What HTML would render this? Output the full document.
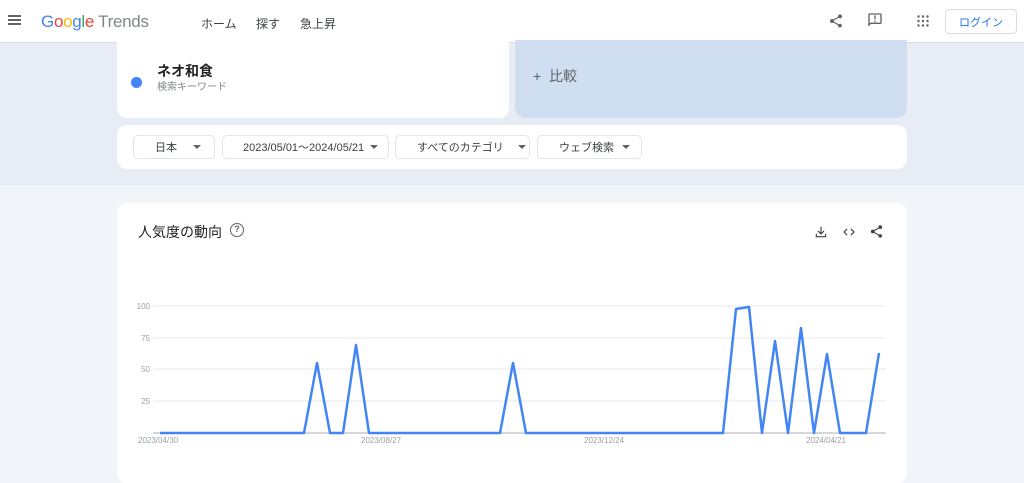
<!DOCTYPE html>
<html><head><meta charset="utf-8"><style>
*{box-sizing:border-box;margin:0;padding:0}
body{width:1024px;height:467px;overflow:hidden;background:#f1f4f9;font-family:"Liberation Sans","Noto Sans CJK JP",sans-serif;position:relative}
.hdr{position:absolute;left:0;top:0;width:1024px;height:43px;background:#fff;border-bottom:1px solid #dde1e6}
.band{position:absolute;left:0;top:43px;width:1024px;height:142px;background:#e8edf5}
.abs{position:absolute}
.card{position:absolute;background:#fff;border-radius:10px}
.btn{position:absolute;top:135px;height:24px;border:1px solid #e2e4e8;border-radius:5px;font-size:11px;color:#3c4043;display:flex;align-items:center}
.tri{display:inline-block;width:0;height:0;border-left:4px solid transparent;border-right:4px solid transparent;border-top:4px solid #5f6368}
</style></head><body>
<div class="hdr">
 <div class="abs" style="left:8px;top:15px;width:13px;height:2px;background:#5f6368;box-shadow:0 4px 0 #5f6368,0 8px 0 #5f6368"></div>
 <div class="abs" style="left:41px;top:12px;font-size:17px;letter-spacing:-0.3px"><span style="color:#4285f4">G</span><span style="color:#ea4335">o</span><span style="color:#fbbc05">o</span><span style="color:#4285f4">g</span><span style="color:#34a853">l</span><span style="color:#ea4335">e</span><span style="color:#80868b"> Trends</span></div>
 <div class="abs" style="left:201px;top:15px;font-size:12px;color:#3c4043">ホーム</div>
 <div class="abs" style="left:256px;top:15px;font-size:12px;color:#3c4043">探す</div>
 <div class="abs" style="left:256px;top:41px;width:22px;height:3px;background:#1a73e8;border-radius:2px 2px 0 0"></div>
 <div class="abs" style="left:300px;top:15px;font-size:12px;color:#3c4043">急上昇</div>
 <svg class="abs" style="left:828px;top:13px" width="16" height="16" viewBox="0 0 24 24"><path fill="#5f6368" d="M18 16.1c-.8 0-1.4.3-2 .8l-7.1-4.2c.1-.2.1-.5.1-.7s0-.5-.1-.7L16 7.2c.5.5 1.2.8 2 .8 1.7 0 3-1.3 3-3s-1.3-3-3-3-3 1.3-3 3c0 .2 0 .5.1.7L8 9.8C7.5 9.3 6.8 9 6 9c-1.7 0-3 1.3-3 3s1.3 3 3 3c.8 0 1.5-.3 2-.8l7.1 4.2c-.1.2-.1.4-.1.6 0 1.6 1.3 2.9 2.9 2.9s2.9-1.3 2.9-2.9-1.2-2.9-2.8-2.9z"/></svg>
 <svg class="abs" style="left:867px;top:12px" width="16" height="16" viewBox="0 0 24 24"><path fill="#5f6368" d="M20 2H4c-1.1 0-2 .9-2 2v18l4-4h14c1.1 0 2-.9 2-2V4c0-1.1-.9-2-2-2zm0 14H5.2L4 17.2V4h16v12zM11 5h2v6h-2zm0 8h2v2h-2z"/></svg>
 <svg class="abs" style="left:917px;top:15px" width="12" height="12" viewBox="0 0 12 12" fill="#5f6368"><circle cx="1.5" cy="1.5" r="1.2"/><circle cx="6" cy="1.5" r="1.2"/><circle cx="10.5" cy="1.5" r="1.2"/><circle cx="1.5" cy="6" r="1.2"/><circle cx="6" cy="6" r="1.2"/><circle cx="10.5" cy="6" r="1.2"/><circle cx="1.5" cy="10.5" r="1.2"/><circle cx="6" cy="10.5" r="1.2"/><circle cx="10.5" cy="10.5" r="1.2"/></svg>
 <div class="abs" style="left:945px;top:9px;width:72px;height:25px;border:1px solid #dadce0;border-radius:4px;color:#1a73e8;font-size:11px;display:flex;align-items:center;justify-content:center">ログイン</div>
</div>
<div class="band"></div>
<div class="card" style="left:117px;top:40px;width:392px;height:78px;border-radius:0 0 10px 10px"></div>
<div class="abs" style="left:131px;top:77px;width:11px;height:11px;border-radius:50%;background:#4285f4"></div>
<div class="abs" style="left:157px;top:61px;font-size:14px;color:#202124;font-weight:bold">ネオ和食</div>
<div class="abs" style="left:157px;top:78px;font-size:10px;color:#80868b">検索キーワード</div>
<div class="abs" style="left:515px;top:40px;width:392px;height:78px;background:#d0def2;border-radius:0 0 10px 10px"></div>
<div class="abs" style="left:533px;top:66px;font-size:14px;color:#5f6368">+&nbsp;&nbsp;比較</div>
<div class="card" style="left:117px;top:125px;width:790px;height:44px"></div>
<div class="btn" style="left:133px;width:82px;padding-left:21px">日本<span class="tri" style="margin-left:16px"></span></div>
<div class="btn" style="left:222px;width:167px;padding-left:20px">2023/05/01〜2024/05/21<span class="tri" style="margin-left:6px"></span></div>
<div class="btn" style="left:395px;width:135px;padding-left:21px">すべてのカテゴリ<span class="tri" style="margin-left:14px"></span></div>
<div class="btn" style="left:537px;width:105px;padding-left:21px">ウェブ検索<span class="tri" style="margin-left:8px"></span></div>
<div class="card" style="left:117px;top:203px;width:790px;height:280px"></div>
<div class="abs" style="left:138px;top:222px;font-size:14px;color:#202124">人気度の動向</div>
<div class="abs" style="left:230px;top:223px;width:14px;height:14px;border:1.5px solid #5f6368;border-radius:50%;font-size:9px;color:#5f6368;text-align:center;line-height:11px;font-weight:bold">?</div>
<svg class="abs" style="left:814px;top:225px" width="14" height="14" viewBox="0 0 24 24"><path fill="#3c4043" d="M11 3h2v10l3.5-3.5 1.4 1.4L12 16.8l-5.9-5.9 1.4-1.4L11 13zM3 15h2v4h14v-4h2v6H3z"/></svg>
<svg class="abs" style="left:841px;top:225px" width="16" height="14" viewBox="0 0 24 24"><path fill="#3c4043" d="M9.4 16.6 4.8 12l4.6-4.6L8 6l-6 6 6 6zm5.2 0 4.6-4.6-4.6-4.6L16 6l6 6-6 6z"/></svg>
<svg class="abs" style="left:869px;top:224px" width="15" height="15" viewBox="0 0 24 24"><path fill="#3c4043" d="M18 16.1c-.8 0-1.4.3-2 .8l-7.1-4.2c.1-.2.1-.5.1-.7s0-.5-.1-.7L16 7.2c.5.5 1.2.8 2 .8 1.7 0 3-1.3 3-3s-1.3-3-3-3-3 1.3-3 3c0 .2 0 .5.1.7L8 9.8C7.5 9.3 6.8 9 6 9c-1.7 0-3 1.3-3 3s1.3 3 3 3c.8 0 1.5-.3 2-.8l7.1 4.2c-.1.2-.1.4-.1.6 0 1.6 1.3 2.9 2.9 2.9s2.9-1.3 2.9-2.9-1.2-2.9-2.8-2.9z"/></svg>
<svg class="abs" style="left:0;top:0" width="1024" height="467">
 <g stroke="#e8eaed" stroke-width="1">
  <line x1="153" y1="306" x2="886" y2="306"/><line x1="153" y1="338" x2="886" y2="338"/><line x1="153" y1="369" x2="886" y2="369"/><line x1="153" y1="401" x2="886" y2="401"/>
 </g>
 <line x1="153" y1="433" x2="886" y2="433" stroke="#c8cacd" stroke-width="1.5"/>
 <g font-family="Liberation Sans" font-size="8" fill="#9aa0a6" text-anchor="end">
  <text x="150" y="309">100</text><text x="150" y="341">75</text><text x="150" y="372">50</text><text x="150" y="404">25</text>
 </g>
 <g font-family="Liberation Sans" font-size="8" fill="#9aa0a6">
  <text x="138" y="443">2023/04/30</text><text x="361" y="443">2023/08/27</text><text x="584" y="443">2023/12/24</text><text x="806" y="443">2024/04/21</text>
 </g>
 <polyline fill="none" stroke="#4285f4" stroke-width="2.5" stroke-linejoin="round" points="160,433 304,433 317,363 330,433 343,433 356,345 369,433 500,433 513,363 526,433 723,433 736,309 749,307 762,433 775,341 788,433 801,328 814,433 827,354 840,433 866,433 879,353"/>
</svg>
</body></html>
